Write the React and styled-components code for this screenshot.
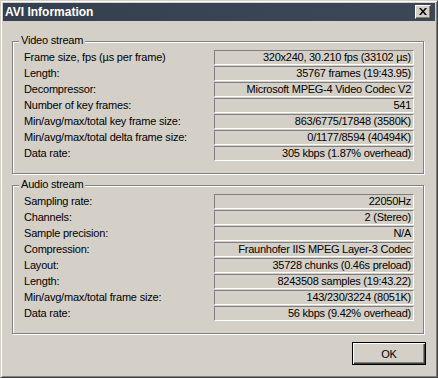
import styled, { createGlobalStyle } from "styled-components";

const GlobalStyle = createGlobalStyle`
  html, body {
    margin: 0;
    padding: 0;
    background: #d4d0c8;
  }
  body {
    font-family: "Liberation Sans", Arial, sans-serif;
  }
`;

const videoRows = [
  ["Frame size, fps (µs per frame)", "320x240, 30.210 fps (33102 µs)"],
  ["Length:", "35767 frames (19:43.95)"],
  ["Decompressor:", "Microsoft MPEG-4 Video Codec V2"],
  ["Number of key frames:", "541"],
  ["Min/avg/max/total key frame size:", "863/6775/17848 (3580K)"],
  ["Min/avg/max/total delta frame size:", "0/1177/8594 (40494K)"],
  ["Data rate:", "305 kbps (1.87% overhead)"],
];

const audioRows = [
  ["Sampling rate:", "22050Hz"],
  ["Channels:", "2 (Stereo)"],
  ["Sample precision:", "N/A"],
  ["Compression:", "Fraunhofer IIS MPEG Layer-3 Codec"],
  ["Layout:", "35728 chunks (0.46s preload)"],
  ["Length:", "8243508 samples (19:43.22)"],
  ["Min/avg/max/total frame size:", "143/230/3224 (8051K)"],
  ["Data rate:", "56 kbps (9.42% overhead)"],
];

const Group = ({ title, rows, first }) => (
  <GroupBox $first={first}>
    <Legend>{title}</Legend>
    <Rows>
      {rows.map(([label, value], i) => (
        <Row key={i}>
          <Label>{label}</Label>
          <Value>{value}</Value>
        </Row>
      ))}
    </Rows>
  </GroupBox>
);

const App = () => {
  return (
    <>
      <GlobalStyle />
      <Window>
        <TitleBar>
          <Title>AVI Information</Title>
          <CloseButton>
            <svg width="8" height="7" viewBox="0 0 8 7">
              <path d="M0 0h2l2 2.5L6 0h2L5 3.5 8 7H6L4 4.5 2 7H0l3-3.5z" fill="#000" />
            </svg>
          </CloseButton>
        </TitleBar>
        <Body>
          <Group title="Video stream" rows={videoRows} first />
          <Group title="Audio stream" rows={audioRows} />
          <Footer>
            <Button>OK</Button>
          </Footer>
        </Body>
      </Window>
    </>
  );
};

export default App;

// css starts from here

const Window = styled.div`
  box-sizing: border-box;
  width: 438px;
  height: 378px;
  display: flex;
  flex-direction: column;
  background: #d4d0c8;
  border: 1px solid;
  border-color: #d4d0c8 #404040 #404040 #d4d0c8;
  box-shadow: inset 1px 1px 0 #fff, inset -1px -1px 0 #808080;
  padding: 2px;
`;

const TitleBar = styled.div`
  height: 18px;
  display: flex;
  align-items: center;
  justify-content: space-between;
  padding: 0 4px 0 2px;
  background: linear-gradient(90deg, #35404f 0%, #3c4758 100%);
`;

const Title = styled.span`
  color: #fff;
  font-size: 12px;
  font-weight: bold;
  line-height: 18px;
`;

const CloseButton = styled.div`
  box-sizing: border-box;
  width: 16px;
  height: 14px;
  display: flex;
  align-items: center;
  justify-content: center;
  background: #d4d0c8;
  border: 1px solid;
  border-color: #fff #404040 #404040 #fff;
  box-shadow: inset -1px -1px 0 #808080;
  padding: 0 1px 1px 0;
`;

const Body = styled.div`
  flex: 1;
  display: flex;
  flex-direction: column;
  padding: 0 11px 10px 9px;
`;

const GroupBox = styled.div`
  position: relative;
  margin-top: ${(p) => (p.$first ? "20px" : "11px")};
  border: 1px solid #808080;
  box-shadow: 1px 1px 0 #fff, inset 1px 1px 0 #fff;
  padding: 8px 9px 12px 11px;
`;

const Legend = styled.span`
  position: absolute;
  top: -8px;
  left: 6px;
  padding: 0 2px;
  background: #d4d0c8;
  font-size: 11px;
  line-height: 13px;
  letter-spacing: -0.2px;
  color: #000;
`;

const Rows = styled.div`
  display: flex;
  flex-direction: column;
  gap: 1px;
`;

const Row = styled.div`
  display: grid;
  grid-template-columns: 1fr 200px;
  align-items: center;
  height: 15px;
`;

const Label = styled.span`
  font-size: 11px;
  line-height: 13px;
  letter-spacing: -0.2px;
  color: #000;
  white-space: nowrap;
`;

const Value = styled.div`
  box-sizing: border-box;
  height: 15px;
  border: 1px solid;
  border-color: #808080 #fff #fff #808080;
  padding: 0 2px;
  text-align: right;
  font-size: 11px;
  line-height: 13px;
  letter-spacing: -0.25px;
  color: #000;
  white-space: nowrap;
  overflow: hidden;
`;

const Footer = styled.div`
  display: flex;
  justify-content: flex-end;
  margin: 8px -2px 0 0;
`;

const Button = styled.div`
  box-sizing: border-box;
  width: 74px;
  height: 23px;
  display: flex;
  align-items: center;
  justify-content: center;
  border: 1px solid #000;
  background: #d4d0c8;
  box-shadow: inset 1px 1px 0 #fff, inset -1px -1px 0 #404040, inset -2px -2px 0 #808080;
  font-size: 11px;
  letter-spacing: -0.2px;
  color: #000;
`;
